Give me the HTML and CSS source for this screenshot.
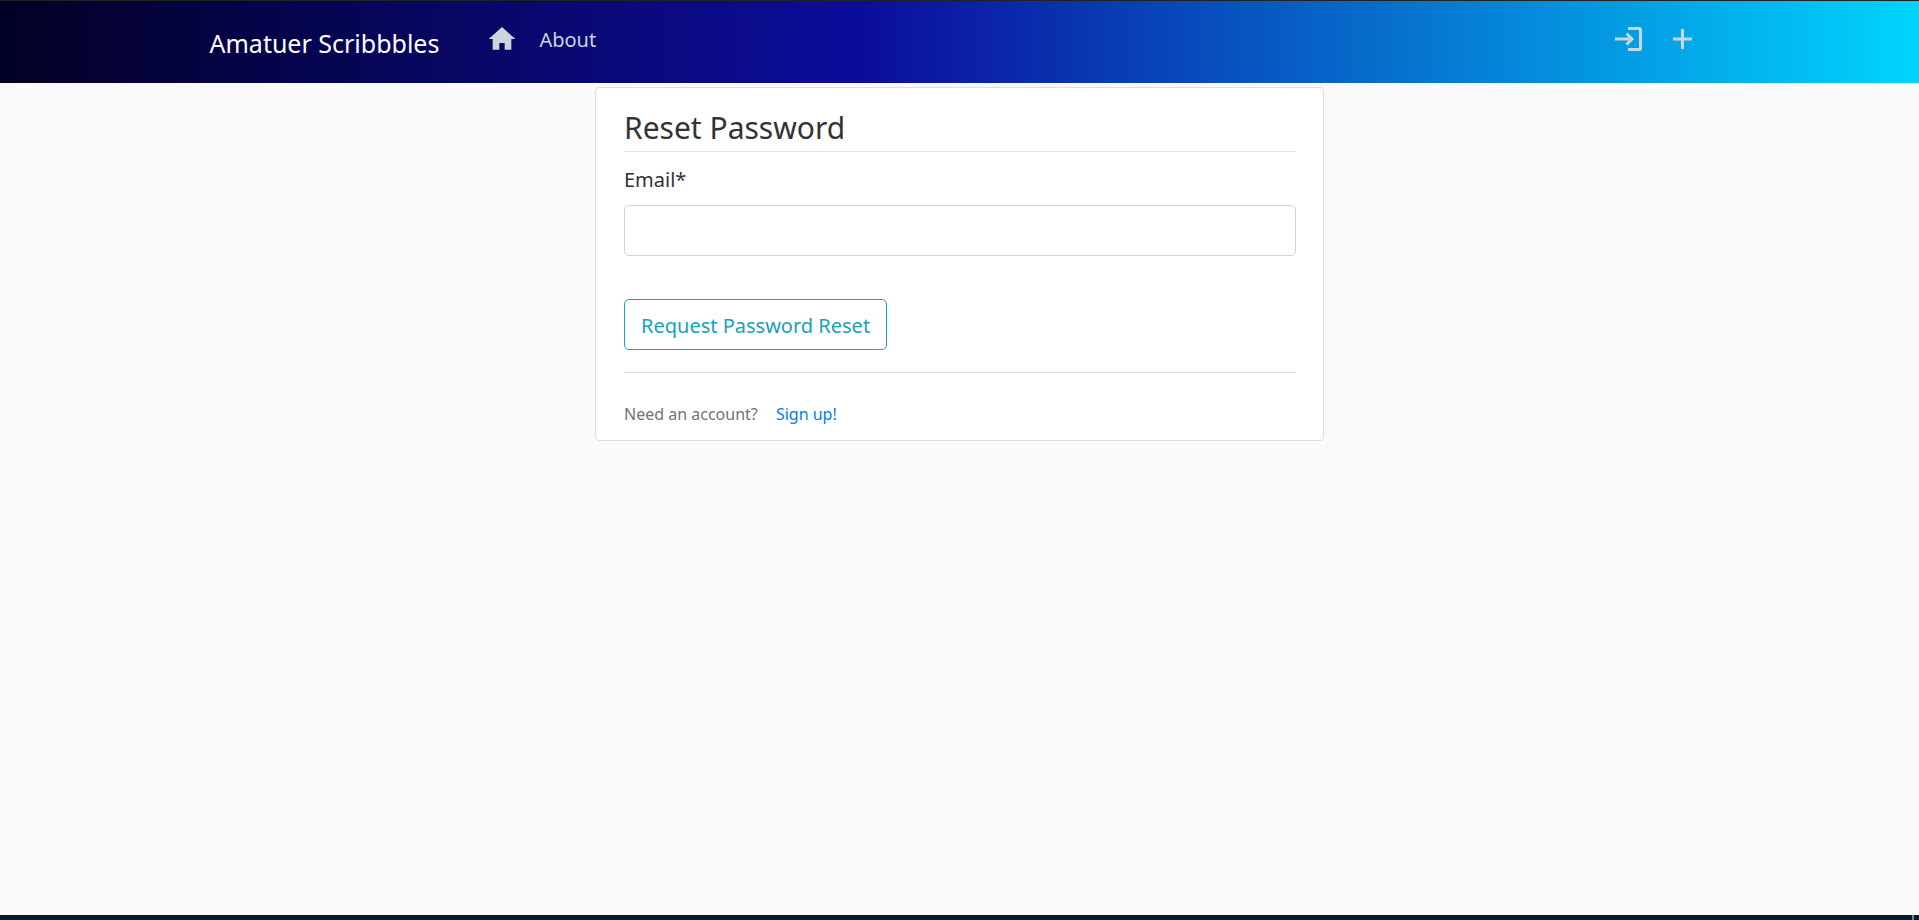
FILE: index.html
```html
<!DOCTYPE html>
<html lang="en">
<head>
<meta charset="utf-8">
<meta name="viewport" content="width=device-width, initial-scale=1">
<title>Reset Password</title>
<link rel="stylesheet" href="styles.css">
</head>
<body>
<header class="navbar">
  <nav class="navbar-inner">
    <a class="brand" href="#">Amatuer Scribbbles</a>
    <a class="nav-link" href="#" aria-label="Home">
      <svg class="icon" viewBox="0 0 24 24"><path fill="currentColor" d="M10 20v-5h4v5h5v-8h3L12 3 2 12h3v8z"/></svg>
    </a>
    <a class="nav-link nav-text" href="#">About</a>
    <div class="nav-end">
      <a class="nav-link" href="#" aria-label="Log in">
        <svg class="icon" viewBox="0 0 32 32" fill="none" stroke="currentColor" stroke-width="3"><path d="M15 5.500H26.500Q27.500 5.500 27.500 6.500V25.500Q27.500 26.500 26.500 26.500H15M2 16H18"/><path d="M13.500 10.500L19 16L13.500 21.500"/></svg>
      </a>
      <a class="nav-link" href="#" aria-label="Register">
        <svg class="icon" viewBox="0 0 32 32" fill="none" stroke="currentColor" stroke-width="3"><path d="M6 16H25M15.500 6V26"/></svg>
      </a>
    </div>
  </nav>
</header>
<main class="content">
  <section class="card">
    <form class="form">
      <h1 class="title">Reset Password</h1>
      <label class="label" for="email">Email*</label>
      <input class="field" id="email" type="email" required>
      <button class="button" type="submit">Request Password Reset</button>
    </form>
    <p class="signup">Need an account? <a class="signup-link" href="#">Sign up!</a></p>
  </section>
</main>
<footer class="footer"><span class="footer-mark"></span></footer>
</body>
</html>
```
FILE: styles.css
```css
* { box-sizing: border-box; }

body {
  margin: 0;
  min-height: 100vh;
  display: flex;
  flex-direction: column;
  background: #fafafa;
  color: #333;
  font-family: "Segoe UI", "Noto Sans", "Open Sans", sans-serif;
  font-size: 20px;
  line-height: 32px;
}

.navbar {
  border-top: 1px solid #222;
  padding: 16px 24px 20px;
  background: linear-gradient(90deg, #020024 0%, #0c0c9c 45%, #00d4ff 100%) padding-box;
}

.navbar-inner {
  display: flex;
  align-items: flex-start;
  max-width: 1500px;
  margin: 0 auto;
}

.brand {
  margin-right: 36px;
  padding: 7px 0 1px;
  color: #fff;
  font-size: 25px;
  line-height: 38px;
  text-decoration: none;
}

.nav-link {
  display: flex;
  padding: 6px 11px;
  color: #cbd5db;
  text-decoration: none;
}

.nav-text {
  padding: 7px 10px 5px;
}

.icon {
  display: block;
  width: 32px;
  height: 32px;
}

.nav-end {
  display: flex;
  margin-left: auto;
}

.content {
  flex: 1;
  padding: 4px 16px;
}

.card {
  max-width: 729px;
  margin: 0 auto;
  padding: 20px 27px 10px 28px;
  background: #fff;
  border: 1px solid #ddd;
  border-radius: 4px;
}

.form {
  padding-bottom: 22px;
  border-bottom: 1px solid #dcdde1;
}

.title {
  margin: 0 0 12px;
  padding-bottom: 3px;
  border-bottom: 1px solid #dee2e6;
  font-size: 30px;
  font-weight: 400;
  line-height: 40px;
}

.label {
  display: block;
  margin-bottom: 9px;
}

.field {
  display: block;
  width: 100%;
  height: 51px;
  padding: 8px 16px;
  background: #fff;
  border: 1px solid #ced4da;
  border-radius: 5px;
  color: inherit;
  font: inherit;
}

.button {
  display: block;
  margin-top: 43px;
  padding: 10px 16px 7px;
  background: transparent;
  border: 1px solid #17a2b8;
  border-radius: 5px;
  color: #17a2b8;
  font: inherit;
}

.signup {
  margin: 25px 0 0;
  color: #6c757d;
  font-size: 16px;
}

.signup-link {
  margin-left: 14px;
  color: #007bff;
  text-decoration: none;
}

.footer {
  display: flex;
  justify-content: flex-end;
  height: 5px;
  padding-right: 5px;
  background: #041c2c;
}

.footer-mark {
  width: 2px;
  background: #7a8790;
}
```
